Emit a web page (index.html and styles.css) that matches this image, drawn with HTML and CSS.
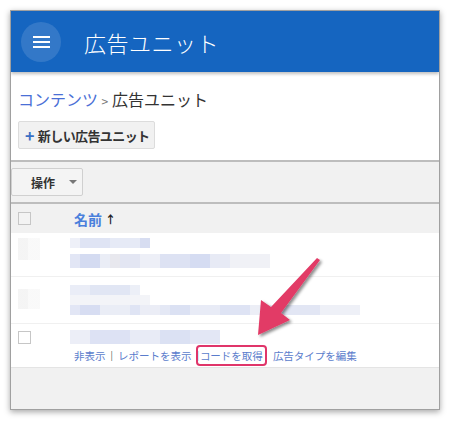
FILE: index.html
```html
<!DOCTYPE html>
<html lang="ja">
<head>
    <meta charset="UTF-8">
    <title>広告ユニット</title>
    <link rel="stylesheet" href="styles.css">
</head>
<body>
    <div class="frame">
        <!-- top app bar -->
        <div class="appbar">
            <div class="menu-btn">
                <span></span><span></span><span></span>
            </div>
            <div class="appbar-title">広告ユニット</div>
        </div>

        <div class="top-area">
            <div class="breadcrumb">
                <a class="crumb-link">コンテンツ</a>
                <span class="crumb-sep">&gt;</span>
                <span>広告ユニット</span>
            </div>
            <button class="new-btn"><span class="plus">+</span>新しい広告ユニット</button>
        </div>

        <div class="toolbar">
            <button class="action-btn">操作<span class="caret"></span></button>
        </div>

        <div class="table">
            <div class="thead">
                <span class="check"></span>
                <span class="col-name">名前</span>
                <span class="sort-arrow">&#8593;</span>
            </div>

            <div class="row row-1">
                <div class="blur-check"></div>
                <div class="cell">
                    <div class="mosaic m-short"></div>
                    <div class="mosaic m-long"></div>
                </div>
            </div>

            <div class="row row-2">
                <div class="blur-check tall"></div>
                <div class="cell">
                    <div class="mosaic m-short2"></div>
                    <div class="mosaic m-faint"></div>
                    <div class="mosaic m-wide"></div>
                </div>
            </div>

            <div class="row row-3">
                <span class="check"></span>
                <div class="cell">
                    <div class="mosaic m-mid"></div>
                    <div class="row-links">
                        <a>非表示</a>
                        <span class="bar">|</span>
                        <a>レポートを表示</a>
                        <span class="bar">|</span>
                        <a class="highlight">コードを取得</a>
                        <a>広告タイプを編集</a>
                    </div>
                </div>
            </div>

            <div class="table-foot"></div>
        </div>

        <!-- callout arrow over the table -->
        <svg class="callout" width="430" height="400" viewBox="0 0 430 400">
            <defs>
                <filter id="sh" x="-20%" y="-20%" width="140%" height="140%">
                    <feDropShadow dx="2" dy="2" stdDeviation="1.5" flood-color="#000" flood-opacity="0.45"/>
                </filter>
            </defs>
            <polygon points="306,247 309,249 270,302 279,309 247,324 250,289 260,296" fill="#e23a66" filter="url(#sh)"/>
        </svg>
    </div>
</body>
</html>
```

FILE: styles.css
```css
body {
    margin: 0;
    background-color: #fff;
    font-family: "Noto Sans CJK JP", "Noto Sans", sans-serif;
}

.frame {
    position: relative;
    margin: 10px;
    width: 428px;
    height: 398px;
    border: 1px solid #a0a0a0;
    box-shadow: 0 2px 6px rgba(0,0,0,0.35);
    background-color: #f1f1f1;
    overflow: hidden;
}

.appbar {
    height: 61px;
    background-color: #1565c0;
    display: flex;
    align-items: center;
    padding-left: 10px;
    box-shadow: 0 2px 3px rgba(0,0,0,0.25);
    position: relative;
    z-index: 2;
}

.menu-btn {
    width: 40px;
    height: 40px;
    border-radius: 50%;
    background-color: rgba(255,255,255,0.13);
    display: flex;
    flex-direction: column;
    justify-content: center;
    align-items: center;
    gap: 3px;
}

.menu-btn span {
    display: block;
    width: 17px;
    height: 2px;
    background-color: #fff;
}

.appbar-title {
    margin-left: 23px;
    color: #fff;
    font-size: 22px;
    font-weight: 300;
    letter-spacing: 0.5px;
}

.top-area {
    background-color: #fff;
    padding: 16px 7px 11px;
    border-bottom: 2px solid #bdbdbd;
}

.breadcrumb {
    font-size: 16px;
    color: #333;
    line-height: 22px;
}

.crumb-link {
    color: #4a6fd6;
}

.crumb-sep {
    color: #777;
    font-size: 12px;
}

.new-btn {
    margin-top: 9px;
    height: 28px;
    padding: 0 5px 0 6px;
    background-color: #f1f1f1;
    border: 1px solid #dcdcdc;
    border-radius: 2px;
    font-family: inherit;
    font-size: 13px;
    font-weight: bold;
    letter-spacing: -0.6px;
    color: #333;
    display: flex;
    align-items: center;
}

.plus {
    color: #3a6fc4;
    font-size: 16px;
    font-weight: bold;
    margin-right: 4px;
}

.toolbar {
    height: 40px;
    display: flex;
    align-items: center;
    border-bottom: 2px solid #bdbdbd;
}

.action-btn {
    width: 72px;
    height: 28px;
    background-color: #f4f4f4;
    border: 1px solid #d0d0d0;
    border-radius: 2px;
    font-family: inherit;
    font-size: 12px;
    font-weight: bold;
    color: #333;
    display: flex;
    align-items: center;
    padding: 0 0 0 19px;
    white-space: nowrap;
}

.caret {
    margin-left: 14px;
    border-left: 4px solid transparent;
    border-right: 4px solid transparent;
    border-top: 4px solid #777;
}

.thead {
    height: 29px;
    display: flex;
    align-items: center;
    padding-left: 7px;
}

.check {
    width: 11px;
    height: 11px;
    border: 1px solid #c6c6c6;
    background-color: #fff;
    flex-shrink: 0;
}

.thead .check {
    background-color: #f3f3f3;
}

.col-name {
    margin-left: 43px;
    color: #4a80dc;
    font-size: 14px;
    font-weight: bold;
}

.sort-arrow {
    margin-left: 3px;
    font-size: 11px;
    font-weight: bold;
    color: #222;
}

.row {
    background-color: #fff;
    display: flex;
    padding-left: 7px;
    border-bottom: 1px solid #f0f0f0;
}

.row-1 {
    height: 43px;
}

.row-2 {
    height: 46px;
}

.row-3 {
    height: 44px;
    padding-top: 6px;
    box-sizing: border-box;
    border-bottom: 1px solid #e4e4e4;
}

.row-3 .check {
    margin-top: 1px;
}

.cell {
    margin-left: 30px;
    display: flex;
    flex-direction: column;
}

.row-3 .cell {
    margin-left: 39px;
}

.blur-check {
    width: 22px;
    height: 22px;
    margin-top: 5px;
    background: linear-gradient(90deg, #f2f2f2 0 10px, #f8f8f8 10px 22px);
    opacity: 0.8;
    flex-shrink: 0;
}

.blur-check.tall {
    height: 20px;
    margin-top: 12px;
}

.mosaic {
    height: 10px;
}

.m-short {
    margin-top: 5px;
    width: 80px;
    background: linear-gradient(90deg, #eef0f8 0 10px, #dfe4f4 10px 40px, #e6eaf6 40px 70px, #d7ddf1 70px 80px);
}

.m-long {
    margin-top: 6px;
    width: 200px;
    height: 14px;
    background: linear-gradient(90deg, #e2e6f5 0 10px, #d4dbf1 10px 30px, #eaedf6 30px 40px, #e8e8ee 40px 50px, #e3e6f3 50px 70px, #edeff7 70px 90px, #dde2f3 90px 120px, #d5dcf2 120px 140px, #e7eaf5 140px 160px, #f0f1f6 160px 200px);
}

.m-short2 {
    margin-top: 8px;
    width: 70px;
    background: linear-gradient(90deg, #eaedf7 0 20px, #e1e6f4 20px 60px, #eceff7 60px 70px);
}

.m-faint {
    width: 80px;
    background: linear-gradient(90deg, #f3f4f8 0 80px);
}

.m-wide {
    width: 290px;
    background: linear-gradient(90deg, #e2e6f5 0 10px, #d7ddf2 10px 30px, #eaedf6 30px 60px, #dfe4f4 60px 70px, #ebedf6 70px 90px, #e4e8f5 90px 100px, #dbe1f3 100px 120px, #e8ebf6 120px 150px, #dee3f4 150px 180px, #eceef6 180px 210px, #e2e6f4 210px 250px, #eef0f7 250px 290px);
}

.m-mid {
    width: 150px;
    height: 14px;
    margin-top: 0;
    background: linear-gradient(90deg, #eceef7 0 20px, #dde2f4 20px 60px, #e8ebf6 60px 90px, #dbe1f3 90px 120px, #e3e7f5 120px 150px);
}

.row-links {
    margin-top: 1px;
    margin-left: 4px;
    font-size: 10.5px;
    color: #5a7ccc;
    display: flex;
    align-items: center;
    white-space: nowrap;
}

.row-links .bar {
    color: #555;
    margin: 0 5px;
    font-size: 9px;
}

.highlight {
    border: 2px solid #e0356a;
    border-radius: 4px;
    padding: 1px 2px;
    margin-left: -8px;
    margin-right: 6px;
}

.table-foot {
    height: 44px;
}

.callout {
    position: absolute;
    left: 0;
    top: 0;
    pointer-events: none;
    z-index: 5;
}
```
